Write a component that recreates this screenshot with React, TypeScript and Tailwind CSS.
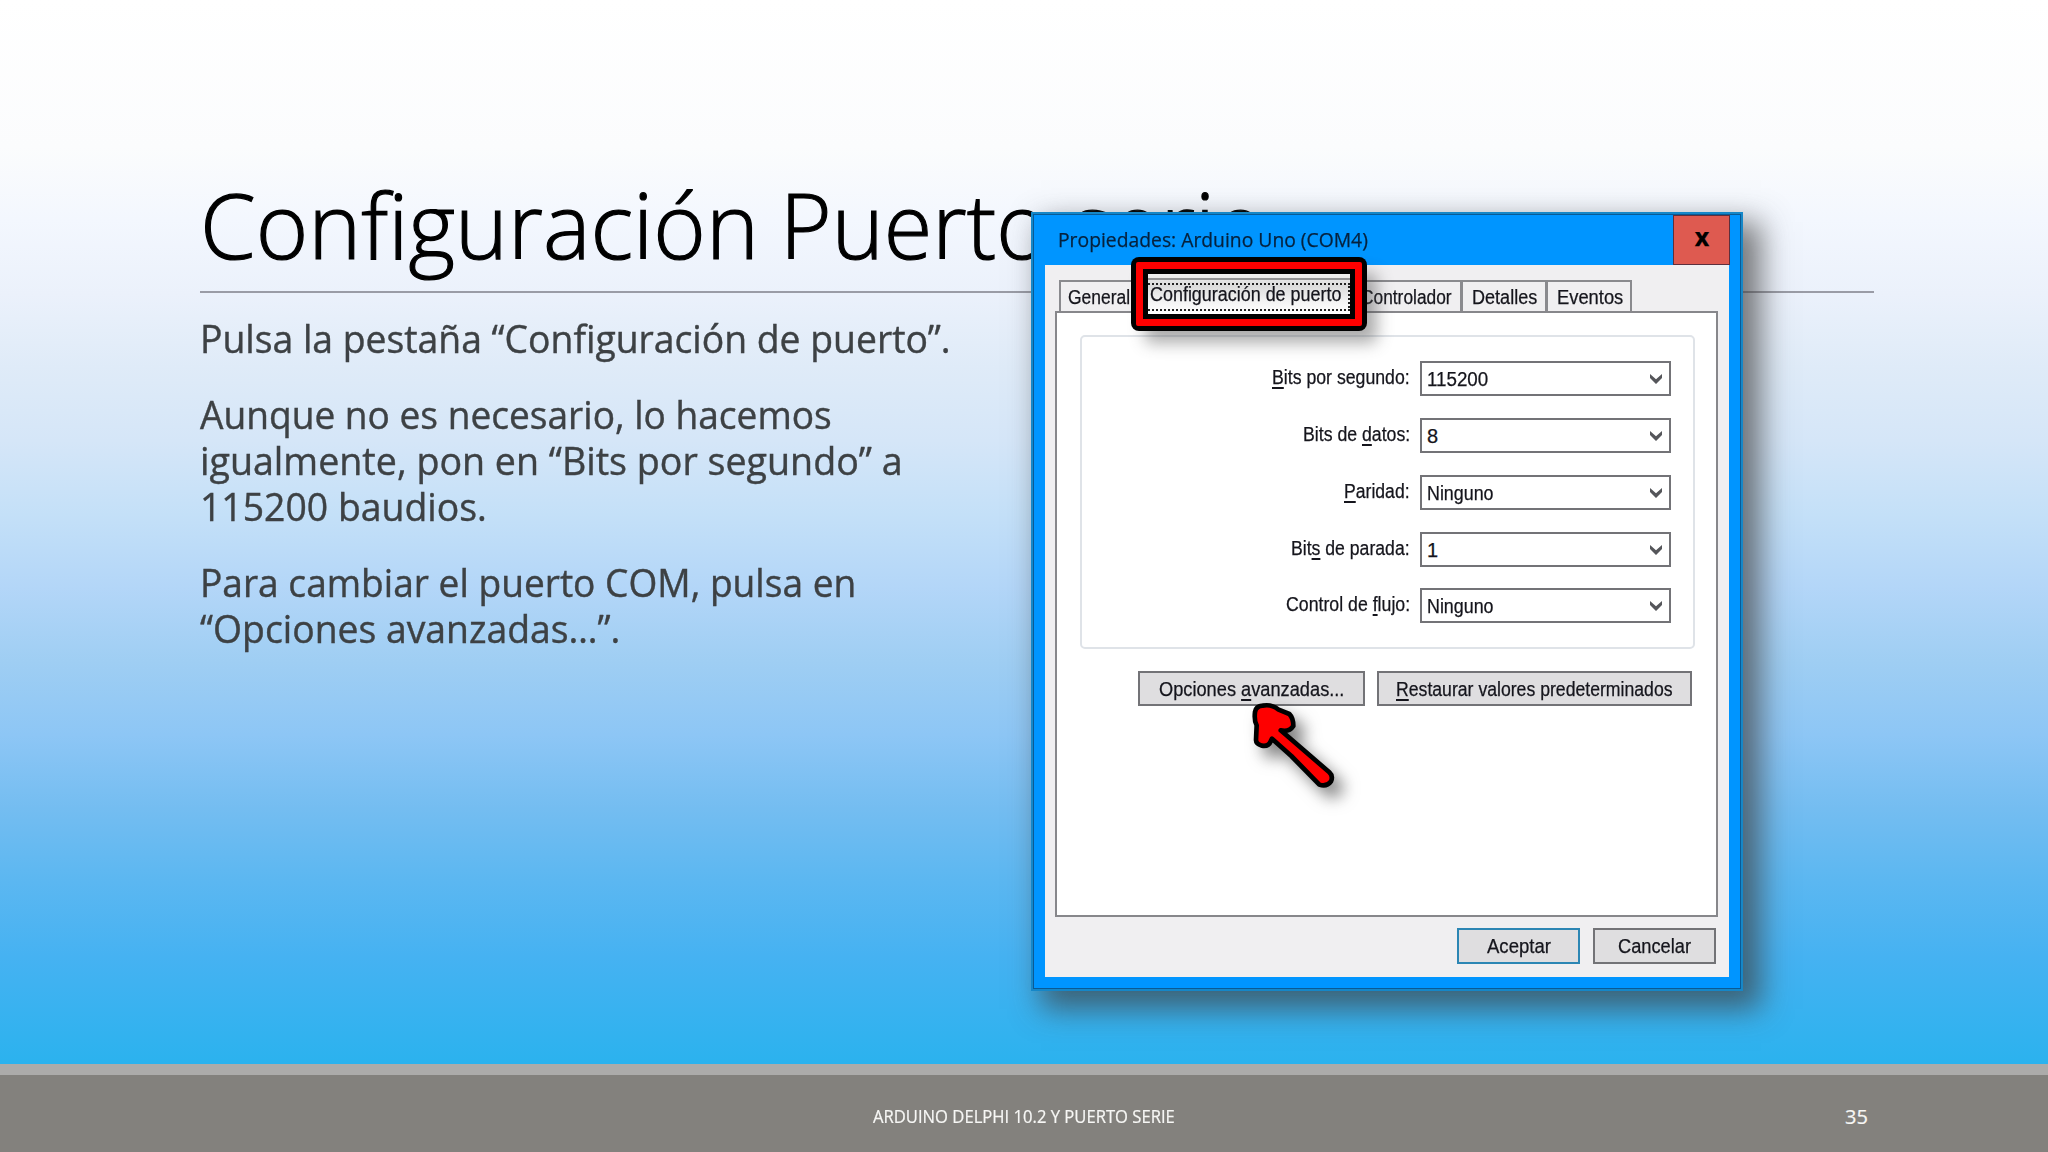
import React, { useLayoutEffect, useRef, useState } from "react";

/* Single line of text condensed or stretched to a given width. */
function Fit({ w, children, className = "" }: { w: number; children: React.ReactNode; className?: string }) {
  const ref = useRef<HTMLSpanElement>(null);
  const [scale, setScale] = useState(1);
  useLayoutEffect(() => {
    if (ref.current) setScale(w / ref.current.offsetWidth);
  }, [w]);
  return (
    <span className={`block shrink-0 ${className}`} style={{ width: w }}>
      <span ref={ref} className="inline-block origin-left whitespace-nowrap align-top" style={{ transform: `scaleX(${scale})` }}>
        {children}
      </span>
    </span>
  );
}

const U = ({ children }: { children: React.ReactNode }) => (
  <span className="underline decoration-2 underline-offset-[3px] [text-decoration-skip-ink:none]">{children}</span>
);

const rows = [
  { label: <><U>B</U>its por segundo:</>, lw: 138, value: "115200", vw: 61, gap: "h-[57px]" },
  { label: <>Bits de <U>d</U>atos:</>, lw: 107, value: "8", vw: 11, gap: "h-[57px]" },
  { label: <><U>P</U>aridad:</>, lw: 66, value: "Ninguno", vw: 67, gap: "h-[57px]" },
  { label: <>Bit<U>s</U> de parada:</>, lw: 119, value: "1", vw: 11, gap: "h-[56px]" },
  { label: <>Control de <U>f</U>lujo:</>, lw: 124, value: "Ninguno", vw: 67, gap: "h-[35px]" },
];

function Select({ value, vw }: { value: string; vw: number }) {
  return (
    <div className="flex h-[35px] w-[251px] items-start justify-between border-2 border-[#737377] bg-white pl-[5px] pr-[6px]">
      <Fit w={vw} className="leading-[33px]">{value}</Fit>
      <svg className="mt-[10px] h-[12px] w-[14px]" viewBox="0 0 14 12">
        <path d="M1 1 L7 6.2 L13 1 V5 L7 11 L1 5 Z" fill="#55565a" />
      </svg>
    </div>
  );
}

function Dialog() {
  return (
    <div className="absolute left-[1031px] top-[212px] flex h-[779px] w-[712px] flex-col border-2 border-[#1587c8] bg-[#0095ff] font-['Liberation_Sans',sans-serif] text-[20px] text-[#15151c] shadow-[14px_14px_28px_4px_rgba(60,60,60,0.68)] [-webkit-text-stroke:0.25px]">
      <div className="flex grow flex-col border border-[#0a5a94] pb-[11px] pl-[11px] pr-[11px]">
        <div className="flex h-[50px] shrink-0 justify-between">
          <Fit w={310} className="ml-[13px] font-['Open_Sans',sans-serif] text-[20px] leading-[49px] text-[#06213c]">
            Propiedades: Arduino Uno (COM4)
          </Fit>
          <div className="-mr-px flex h-[50px] w-[57px] justify-center border border-[#5d2f3d] bg-[#de5a50] pl-px font-['Open_Sans',sans-serif] text-[25px] font-bold leading-[41px] text-black">
            x
          </div>
        </div>
        <div className="flex grow flex-col bg-[#f0eff1] pl-[11px] pr-[11px]">
          <div className="flex h-[46px] items-end pl-[3px] leading-[31px]">
            <div className="flex h-[31px] w-[80px] border-l-2 border-t-2 border-[#8a8a8e] pl-[7px]">
              <Fit w={62}>General</Fit>
            </div>
            <div className="h-[31px] w-[324px] border-r-[3px] border-t-2 border-[#8a8a8e]">
              <Fit w={91} className="ml-[222px]">Controlador</Fit>
            </div>
            <div className="flex h-[31px] w-[85px] border-r-[3px] border-t-2 border-[#8a8a8e] pl-[9px]">
              <Fit w={65}>Detalles</Fit>
            </div>
            <div className="flex h-[31px] w-[84px] border-r-2 border-t-2 border-[#8a8a8e] pl-[9px]">
              <Fit w={66}>Eventos</Fit>
            </div>
          </div>
          <div className="-ml-px h-[606px] border-2 border-[#87878b] bg-white pl-[23px] pt-[22px]">
            <div className="h-[314px] w-[615px] rounded-[5px] border-2 border-[#dfe3e8] pt-[24px]">
              {rows.map((r, i) => (
                <div key={i} className={`flex ${r.gap} justify-end pr-[22px]`}>
                  <Fit w={r.lw} className="mr-[10px] leading-[33px]">{r.label}</Fit>
                  <Select value={r.value} vw={r.vw} />
                </div>
              ))}
            </div>
            <div className="mt-[22px] flex gap-[12px] pl-[58px] leading-[32px]">
              <div className="flex h-[35px] w-[227px] justify-center border-2 border-[#737377] bg-[#dfdee0]">
                <Fit w={185}>Opciones <U>a</U>vanzadas...</Fit>
              </div>
              <div className="flex h-[35px] w-[315px] justify-center border-2 border-[#737377] bg-[#dfdee0]">
                <Fit w={277}><U>R</U>estaurar valores predeterminados</Fit>
              </div>
            </div>
          </div>
          <div className="mt-[11px] flex justify-end gap-[13px] pr-[2px] leading-[33px]">
            <div className="flex h-[36px] w-[123px] justify-center border-2 border-[#2c86b4] bg-[#dfdee0]">
              <Fit w={64}>Aceptar</Fit>
            </div>
            <div className="flex h-[36px] w-[123px] justify-center border-2 border-[#737377] bg-[#dfdee0]">
              <Fit w={73}>Cancelar</Fit>
            </div>
          </div>
        </div>
      </div>

      {/* highlighted tab */}
      <div className="absolute left-[98px] top-[43px] h-[74px] w-[236px] rounded-[8px] bg-black p-[5px] shadow-[12px_14px_16px_-2px_rgba(70,70,70,0.45)]">
        <div className="h-full rounded-[2px] bg-[#fe0000] p-[7px]">
          <div className="h-full bg-black p-[5px]">
            <div className="h-full bg-[linear-gradient(#efefef,#dcdcdc_30%,#f2f2f2_65%,#ffffff)] pt-[4px]">
              <div className="h-[31px] border-t-2 border-[#919193] pt-[3px]">
                <div className="h-[28px] border-y-2 border-r-2 border-dotted border-[#222] pl-[2px] leading-[19px]">
                  <Fit w={191}>Configuración de puerto</Fit>
                </div>
              </div>
            </div>
          </div>
        </div>
      </div>

      {/* pointer arrow */}
      <svg className="absolute left-[207px] top-[476px] h-[127px] w-[130px] drop-shadow-[9px_10px_8px_rgba(50,50,50,0.6)]" viewBox="360 120 390 381">
        <path
          d="M405 186 Q408 168 428 167 Q455 162 474 178 L508 192 Q520 204 520 228 Q508 247 482 241 L628 367 Q640 378 633 394 Q620 412 598 404 L514 318 L456 266 L452 274 Q446 290 426 287 Q408 282 408 270 L410 226 Q402 212 405 186 Z"
          fill="#fe0000"
          stroke="#000"
          strokeWidth="14"
          strokeLinejoin="round"
        />
      </svg>
    </div>
  );
}

export default function App() {
  return (
    <div className="relative flex h-[1152px] w-[2048px] flex-col overflow-hidden bg-[#83817d] font-['Open_Sans',sans-serif]">
      <main className="h-[1064px] bg-[linear-gradient(#ffffff_0px,#fbfcfd_147px,#f3f7fe_220px,#ebf1fb_294px,#dfebf8_367px,#d5e6f8_441px,#c4e0f8_514px,#b3d6f8_588px,#9fcef3_661px,#8dc6f5_735px,#74bdf1_808px,#5bb7f1_882px,#46b2f2_955px,#2bb2ee_1064px)] pl-[200px] pt-[174px]">
        <h1 className="flex h-[100px] gap-[21px] text-[90.5px] font-light leading-[100px] text-black [-webkit-text-stroke:1.2px_#000]">
          <Fit w={559}>Configuración</Fit>
          <Fit w={483}>Puerto serie</Fit>
        </h1>
        <div className="mt-[17px] h-[2px] w-[1674px] bg-[#9a9ca6]" />
        <div className="mt-[23px] text-[37.5px] leading-[46px] text-[#3d4144] [-webkit-text-stroke:0.4px]">
          <p><Fit w={751}>Pulsa la pestaña “Configuración de puerto”.</Fit></p>
          <div className="mt-[30px]">
            <Fit w={632}>Aunque no es necesario, lo hacemos</Fit>
            <Fit w={703}>igualmente, pon en “Bits por segundo” a</Fit>
            <Fit w={287}>115200 baudios.</Fit>
          </div>
          <div className="mt-[30px]">
            <Fit w={656}>Para cambiar el puerto COM, pulsa en</Fit>
            <Fit w={420}>“Opciones avanzadas…”.</Fit>
          </div>
        </div>
      </main>
      <footer className="flex h-[88px] justify-between border-t-[11px] border-[#acabaa] pl-[873px] pr-[180px] text-[#f7f7f5] [-webkit-text-stroke:0.2px]">
        <Fit w={302} className="text-[17.5px] leading-[82px]">ARDUINO DELPHI 10.2 Y PUERTO SERIE</Fit>
        <Fit w={23} className="text-[20px] leading-[83px]">35</Fit>
      </footer>
      <Dialog />
    </div>
  );
}
